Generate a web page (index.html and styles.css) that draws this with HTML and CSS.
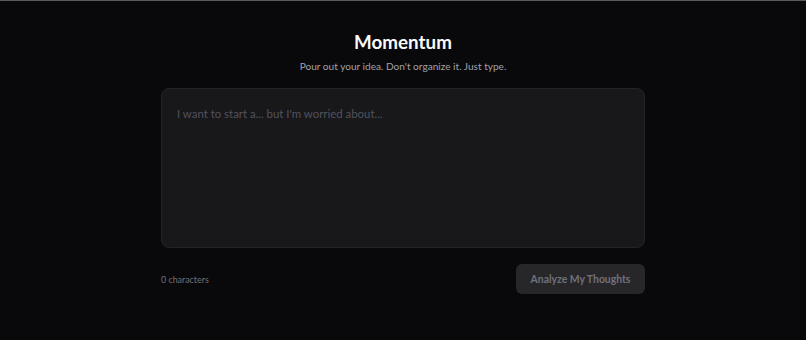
FILE: index.html
```html
<!DOCTYPE html>
<html lang="en">
<head>
<meta charset="utf-8">
<title>Momentum</title>
<link rel="stylesheet" href="styles.css">
</head>
<body>
<main class="page">
  <header class="head">
    <h1 class="title">Momentum</h1>
    <p class="subtitle">Pour out your idea. Don't organize it. Just type.</p>
  </header>
  <textarea class="entry" placeholder="I want to start a... but I'm worried about..."></textarea>
  <div class="footer">
    <span class="count">0 characters</span>
    <button class="analyze" disabled>Analyze My Thoughts</button>
  </div>
</main>
</body>
</html>
```
FILE: styles.css
```css
* { box-sizing: border-box; }
html, body { height: 100%; }
body {
  margin: 0;
  background: #09090b;
  border-top: 1px solid #5a5a5c;
  font-family: "Lato", "Noto Sans", sans-serif;
  color: #fafafa;
}
.page {
  width: 484px;
  margin: 0 auto;
  padding-top: 29px;
  display: flex;
  flex-direction: column;
}
.head { text-align: center; }
.title {
  margin: 0;
  font-size: 18.8px;
  font-weight: 700;
  line-height: 24px;
  color: #fafafa;
}
.subtitle {
  margin: 4px 0 0;
  font-size: 10.1px;
  line-height: 16px;
  color: #a1a1aa;
}
.entry {
  margin-top: 14px;
  height: 160px;
  width: 100%;
  resize: none;
  background: #18181b;
  border: 1px solid #232326;
  border-radius: 8px;
  padding: 16px 15px;
  font-family: inherit;
  font-size: 11.4px;
  line-height: 18px;
  color: #e4e4e7;
  outline: none;
}
.entry::placeholder { color: #52525b; }
.footer {
  margin-top: 16px;
  display: flex;
  justify-content: space-between;
  align-items: center;
}
.count {
  font-size: 8.9px;
  color: #71717a;
}
.analyze {
  width: 129px;
  height: 30px;
  border: none;
  border-radius: 6px;
  background: #27272a;
  color: #71717a;
  font-family: inherit;
  font-size: 10.4px;
  font-weight: 700;
}
```
